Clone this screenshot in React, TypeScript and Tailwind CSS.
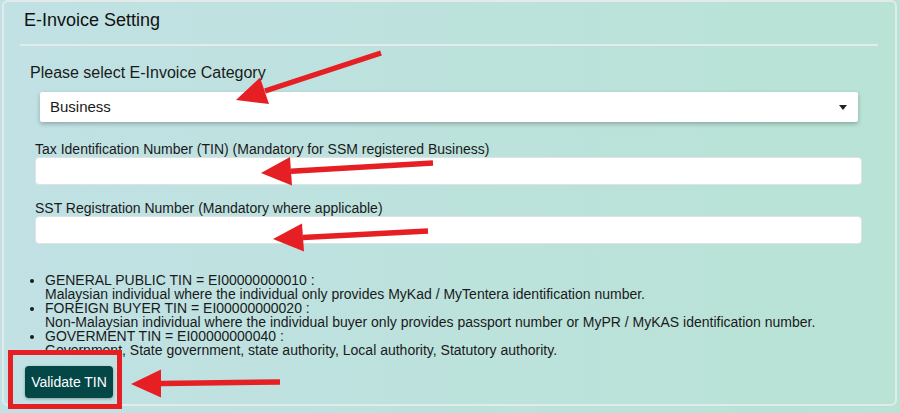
import React from "react";

const notes = [
  {
    head: "GENERAL PUBLIC TIN = EI00000000010 :",
    body: "Malaysian individual where the individual only provides MyKad / MyTentera identification number.",
  },
  {
    head: "FOREIGN BUYER TIN = EI00000000020 :",
    body: "Non-Malaysian individual where the individual buyer only provides passport number or MyPR / MyKAS identification number.",
  },
  {
    head: "GOVERMENT TIN = EI00000000040 :",
    body: "Government, State government, state authority, Local authority, Statutory authority.",
  },
];

function Arrow({ tail, tip, base1, base2, mid }: { tail: [number, number]; tip: [number, number]; base1: [number, number]; base2: [number, number]; mid: [number, number] }) {
  return (
    <g fill="#e51f23" stroke="#e51f23">
      <line x1={tail[0]} y1={tail[1]} x2={mid[0]} y2={mid[1]} strokeWidth={5.5} />
      <polygon points={`${tip[0]},${tip[1]} ${base1[0]},${base1[1]} ${base2[0]},${base2[1]}`} strokeWidth={0} />
    </g>
  );
}

export default function App() {
  return (
    <div
      className="relative w-[900px] h-[413px] overflow-hidden bg-linear-to-r from-[#c1e1e4] to-[#b8e3d5] text-[#1a1a1a]"
      style={{ fontFamily: '"Liberation Sans", Arial, sans-serif' }}
    >
      <div className="ml-[2px] w-[895px] h-[406px] border-2 border-[#e2eaea] rounded-[6px]">
        <div className="mt-[6px] pl-[20px] text-[18px] leading-[24px] text-[#111]">E-Invoice Setting</div>
        <div className="mt-[12px] ml-[16px] w-[858px] h-[2px] bg-[#e3ebeb]" />

        <div className="mt-[18px] ml-[26px] text-[16px] leading-[18px]">Please select E-Invoice Category</div>
        <div className="mt-[10px] ml-[36px] w-[818px] h-[30px] bg-white rounded-[2px] shadow-[0_2px_4px_rgba(0,0,0,0.25)] flex items-center justify-between pl-[10px] pr-[11px]">
          <span className="text-[15px]">Business</span>
          <span className="w-0 h-0 border-l-[4px] border-r-[4px] border-t-[5px] border-l-transparent border-r-transparent border-t-[#222]" />
        </div>

        <div className="mt-[19px] ml-[31px] text-[14px] leading-[16px]">
          Tax Identification Number (TIN) (Mandatory for SSM registered Business)
        </div>
        <div className="ml-[31px] w-[827px] h-[28px] bg-white rounded-[4px] border border-[#dfe3e3]" />

        <div className="mt-[15px] ml-[31px] text-[14px] leading-[16px]">SST Registration Number (Mandatory where applicable)</div>
        <div className="ml-[31px] w-[827px] h-[28px] bg-white rounded-[4px] border border-[#dfe3e3]" />

        <ul className="mt-[29px] ml-[41px] list-disc text-[14px] leading-[14px]">
          {notes.map((n) => (
            <li key={n.head}>
              {n.head}
              <br />
              {n.body}
            </li>
          ))}
        </ul>

        <button className="mt-[9px] ml-[21px] w-[88px] h-[32px] rounded-[4px] bg-[#034747] text-white text-[14px] shadow-[0_1px_3px_rgba(0,0,0,0.3)]">
          Validate TIN
        </button>
      </div>

      <svg className="absolute left-0 top-0 pointer-events-none" width="900" height="413" viewBox="0 0 900 413">
        <Arrow tail={[381, 53]} tip={[236, 100]} base1={[260, 77.5]} base2={[269, 104]} mid={[265, 91]} />
        <Arrow tail={[433, 163]} tip={[261, 173]} base1={[290, 157]} base2={[292, 185.5]} mid={[291, 171.3]} />
        <Arrow tail={[428, 231]} tip={[273, 239]} base1={[302, 223.5]} base2={[304, 251.5]} mid={[303, 237.5]} />
        <Arrow tail={[280, 382]} tip={[131, 384]} base1={[161, 369.5]} base2={[161, 397.5]} mid={[161, 383.6]} />
        <rect x={10.5} y={352.5} width={109} height={54} fill="none" stroke="#e51f23" strokeWidth={5} />
      </svg>
    </div>
  );
}
